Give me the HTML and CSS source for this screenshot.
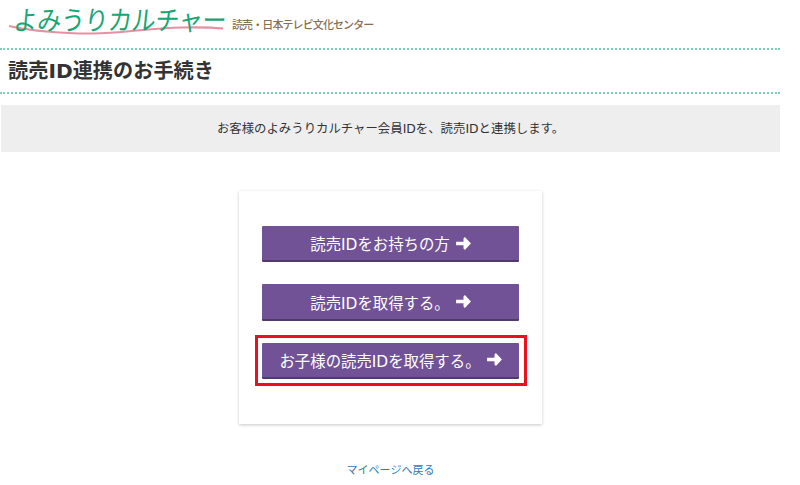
FILE: index.html
```html
<!DOCTYPE html>
<html lang="ja">
<head>
<meta charset="utf-8">
<title>読売ID連携のお手続き</title>
<link rel="stylesheet" href="styles.css">
</head>
<body>
<div class="page">
  <header class="site-header">
    <div class="logo">
      <svg class="logo-wave" viewBox="0 0 216 12" width="216" height="12" aria-hidden="true"><path d="M1 1 C22 6 60 9 85 8.500 C115 8 140 3 175 2.500 C190 2.200 205 2.500 215 3.500" fill="none" stroke="#e88fa0" stroke-width="2"/></svg>
      <span class="logo-main">よみうりカルチャー</span>
      <span class="logo-sub">読売・日本テレビ文化センター</span>
    </div>
  </header>
  <h1 class="page-title">読売ID連携のお手続き</h1>
  <p class="notice">お客様のよみうりカルチャー会員IDを、読売IDと連携します。</p>
  <section class="card">
    <a class="btn" href="#">読売IDをお持ちの方<svg class="arrow" viewBox="0 0 16 14" aria-hidden="true"><path d="M0 5h8V1.500L9.500 0 16 7l-6.500 7L8 12.500V9H0z" fill="#fff"/></svg></a>
    <a class="btn" href="#">読売IDを取得する。<svg class="arrow" viewBox="0 0 16 14" aria-hidden="true"><path d="M0 5h8V1.500L9.500 0 16 7l-6.500 7L8 12.500V9H0z" fill="#fff"/></svg></a>
    <a class="btn btn-marked" href="#">お子様の読売IDを取得する。<svg class="arrow" viewBox="0 0 16 14" aria-hidden="true"><path d="M0 5h8V1.500L9.500 0 16 7l-6.500 7L8 12.500V9H0z" fill="#fff"/></svg><span class="marker"></span></a>
  </section>
  <p class="back"><a href="#">マイページへ戻る</a></p>
</div>
</body>
</html>
```

FILE: styles.css
```css
* { box-sizing: border-box; }
html, body { margin: 0; padding: 0; background: #fff; overflow: hidden; }
body { font-family: "DejaVu Sans", "Noto Sans CJK JP", sans-serif; color: #333; }
.page { width: 780px; height: 485px; }
.site-header { height: 50px; border-bottom: 2px dotted #7fd0b0; }
.logo { position: relative; display: flex; align-items: baseline; height: 48px; padding: 2px 0 0 14px; }
.logo-main { position: relative; width: 218px; font-family: "Noto Sans CJK JP", sans-serif; font-weight: 400; font-size: 24px; line-height: 34px; letter-spacing: -.4px; color: #17a673; transform: skewX(-6deg) scaleY(1.12); }
.logo-sub { font-family: "Noto Sans CJK JP", sans-serif; font-weight: 500; font-size: 11px; letter-spacing: -.9px; color: #87704f; }
.logo-wave { position: absolute; left: 8px; top: 25px; }
.page-title { height: 44px; margin: 0; padding: 0 0 0 8px; border-bottom: 2px dotted #7fd0b0; font-size: 20.200px; font-weight: 700; line-height: 42px; color: #333; }
.notice { height: 47px; margin: 11px 0 0 1px; background: #eee; font-size: 12.400px; line-height: 47px; text-align: center; color: #333; }
.card { display: flex; flex-direction: column; gap: 22px; width: 303px; height: 233px; margin: 39px 0 0 239px; padding: 35px 23px 0; background: #fff; box-shadow: 0 1px 3px rgba(0,0,0,.22); }
.btn { position: relative; display: flex; justify-content: center; align-items: center; gap: 6px; height: 36.400px; border-bottom: 2px solid #4f3a6b; border-radius: 1px; background: #725296; color: #fff; font-size: 15.400px; text-decoration: none; }
.arrow { width: 15px; height: 13px; }
.marker { position: absolute; left: -7px; right: -8px; top: -8px; bottom: -9px; border: 3px solid #ee0f1c; }
.back { margin: 37px 0 0; padding-left: 1px; text-align: center; font-family: "Noto Sans CJK JP", sans-serif; font-size: 11px; line-height: 16px; }
.back a { color: #337ab7; text-decoration: none; }
```
